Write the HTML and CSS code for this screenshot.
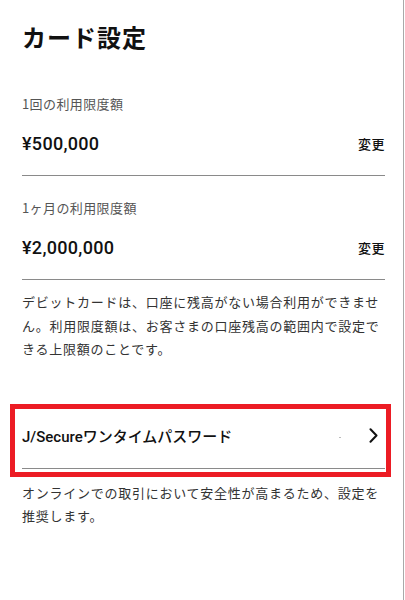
FILE: index.html
```html
<!DOCTYPE html>
<html lang="ja">
<head>
<meta charset="utf-8">
<title>カード設定</title>
<link rel="stylesheet" href="styles.css">
</head>
<body>
<div class="page">
  <h1 class="title">カード設定</h1>

  <section class="limit limit-first">
    <div class="limit-label">1回の利用限度額</div>
    <div class="limit-row">
      <span class="amount">¥500,000</span>
      <span class="change">変更</span>
    </div>
  </section>

  <section class="limit">
    <div class="limit-label">1ヶ月の利用限度額</div>
    <div class="limit-row">
      <span class="amount">¥2,000,000</span>
      <span class="change">変更</span>
    </div>
  </section>

  <p class="desc">デビットカードは、口座に残高がない場合利用ができません。利用限度額は、お客さまの口座残高の範囲内で設定できる上限額のことです。</p>

  <div class="highlight">
    <div class="link-row">
      <span class="link-text">J/Secureワンタイムパスワード</span>
      <span class="spacer"></span>
      <span class="speck"></span>
      <svg class="chevron" width="9" height="15" viewBox="0 0 9 15" aria-hidden="true">
        <path d="M1.5 1.2 L7.5 7.5 L1.5 13.8" fill="none" stroke="#111" stroke-width="2" stroke-linecap="round" stroke-linejoin="round"/>
      </svg>
    </div>
  </div>

  <p class="note">オンラインでの取引において安全性が高まるため、設定を推奨します。</p>
</div>
</body>
</html>
```

FILE: styles.css
```css
html, body {
  margin: 0;
  padding: 0;
  background: #ffffff;
}

body {
  font-family: "Roboto", "Noto Sans CJK JP", sans-serif;
  color: #111;
  text-spacing-trim: space-all;
}

.page {
  box-sizing: border-box;
  width: 404px;
  min-height: 600px;
  border-right: 1px solid #a9a9a9;
  padding-top: 21px;
  padding-bottom: 20px;
}

.title {
  margin: 0 18px 0 22px;
  font-family: "Noto Sans CJK JP", sans-serif;
  font-size: 24px;
  line-height: 32px;
  font-weight: 700;
  letter-spacing: 1px;
  color: #111;
}

.limit {
  margin: 22px 18px 0 22px;
  padding-bottom: 20px;
  border-bottom: 1px solid #8a8a8a;
}

.limit-first {
  margin-top: 41px;
}

.limit-label {
  font-family: "Noto Sans CJK JP", sans-serif;
  font-size: 13px;
  line-height: 20px;
  letter-spacing: 0.4px;
  color: #555;
}

.limit-row {
  display: flex;
  align-items: center;
  justify-content: space-between;
  margin-top: 17px;
  height: 24px;
}

.amount {
  font-family: "Roboto", sans-serif;
  font-size: 18px;
  font-weight: 500;
  letter-spacing: 0.3px;
  color: #111;
}

.change {
  font-family: "Noto Sans CJK JP", sans-serif;
  font-size: 13px;
  font-weight: 500;
  letter-spacing: 0.5px;
  color: #111;
}

.desc {
  margin: 10px 18px 0 22px;
  font-family: "Noto Sans CJK JP", sans-serif;
  font-size: 13px;
  line-height: 23.5px;
  letter-spacing: 0.75px;
  color: #333;
}

.highlight {
  margin: 43px 12px 0 10px;
  border: 5px solid #ec1c24;
  padding: 0 1px 3px 7px;
}

.link-row {
  display: flex;
  align-items: center;
  padding: 17px 0 22px 0;
  border-bottom: 1px solid #8a8a8a;
  height: 20px;
}

.link-text {
  font-family: "Roboto", "Noto Sans CJK JP", sans-serif;
  font-size: 15px;
  font-weight: 500;
  color: #111;
}

.spacer {
  flex: 1;
}

.speck {
  width: 2px;
  height: 1px;
  background: #bbb;
  margin-top: 4px;
  margin-right: 28px;
}

.chevron {
  display: block;
  margin-right: 7px;
}

.note {
  margin: 4px 18px 0 22px;
  font-family: "Noto Sans CJK JP", sans-serif;
  font-size: 13px;
  line-height: 23.5px;
  letter-spacing: 0.75px;
  color: #333;
}
```
